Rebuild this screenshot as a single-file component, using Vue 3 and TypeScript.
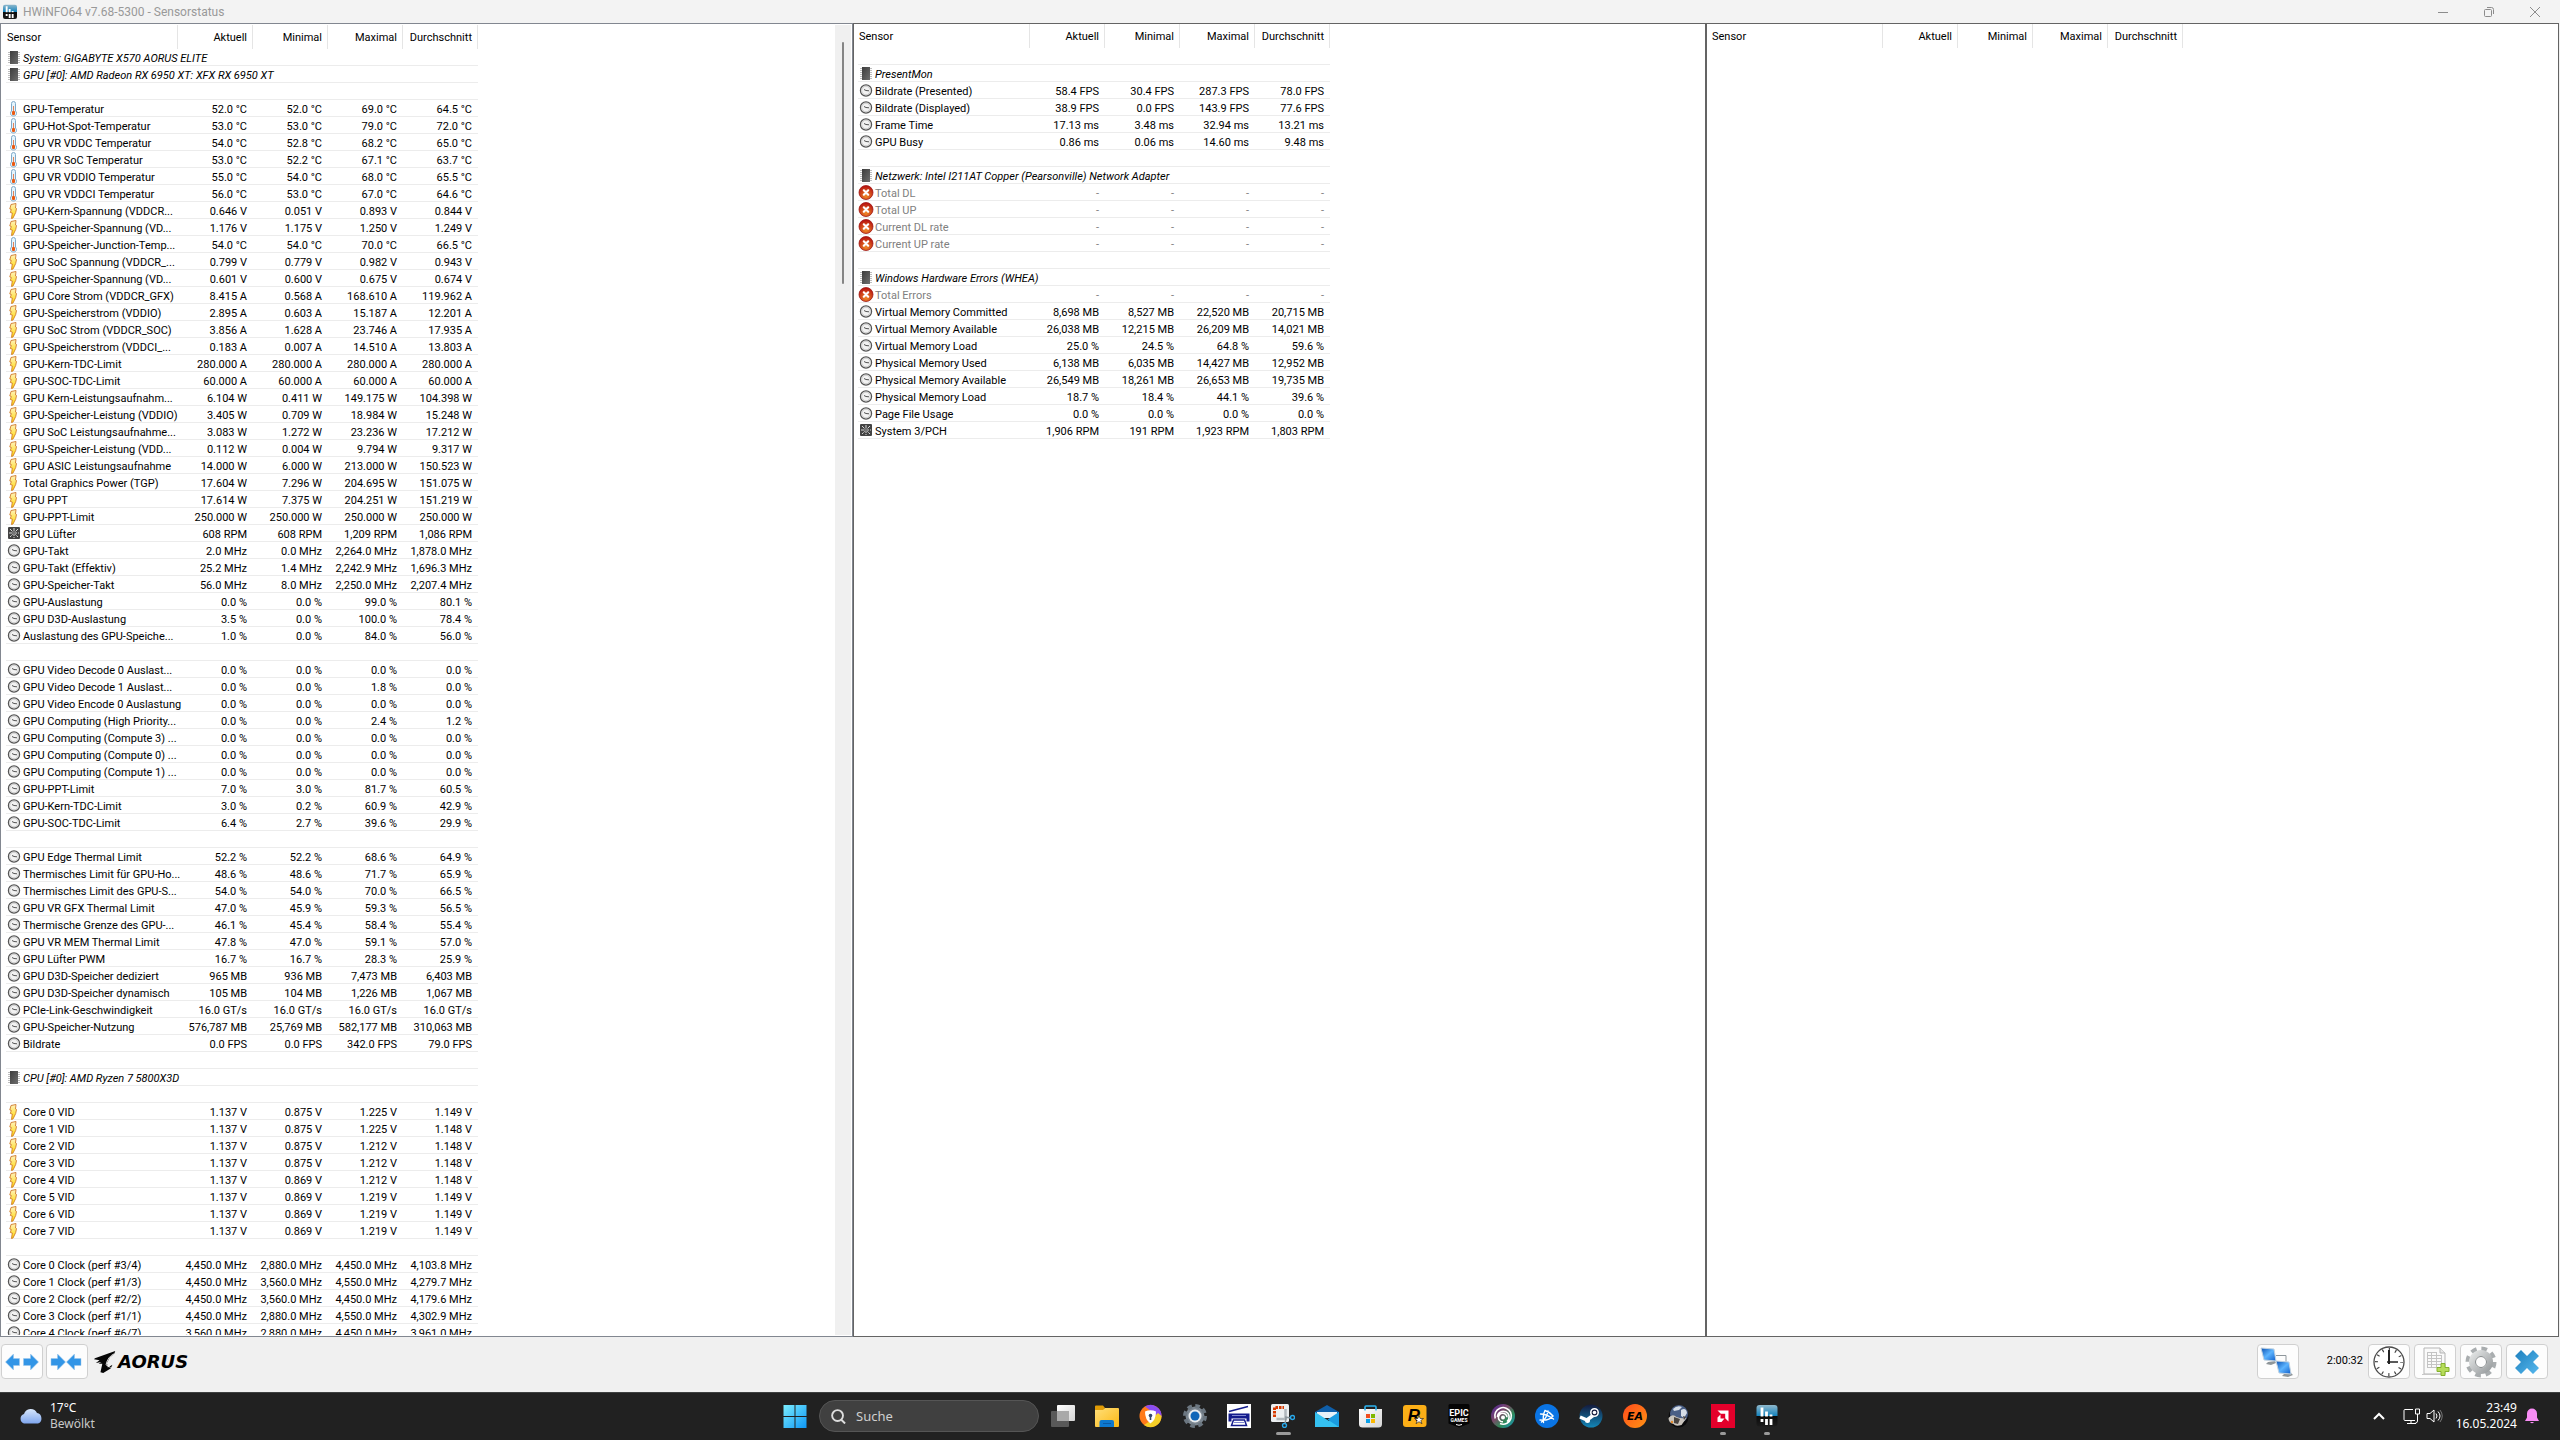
<script setup lang="ts">
type Kind = 'chip' | 'temp' | 'bolt' | 'fan' | 'clock' | 'off'

interface Row {
  kind: Kind | null
  label: string
  values: string[]
}

interface LogoText {
  text: string
  x: number
  y: number
  style: string
}

interface TaskbarApp {
  icon: string
  name: string
  state?: 'active' | 'open'
  logo?: LogoText[]
  overlay?: string
}

const columns = ['Aktuell', 'Minimal', 'Maximal', 'Durchschnitt']

function parse(source: string): Row[] {
  return source
    .trim()
    .split('\n')
    .map((line) => {
      const [kind, label, ...values] = line.trim().split('|')
      return kind === '-'
        ? { kind: null, label: '', values: [] }
        : { kind: kind as Kind, label, values }
    })
}

const systemRows = parse(`
chip|System: GIGABYTE X570 AORUS ELITE
chip|GPU [#0]: AMD Radeon RX 6950 XT: XFX RX 6950 XT
-
temp|GPU-Temperatur|52.0 °C|52.0 °C|69.0 °C|64.5 °C
temp|GPU-Hot-Spot-Temperatur|53.0 °C|53.0 °C|79.0 °C|72.0 °C
temp|GPU VR VDDC Temperatur|54.0 °C|52.8 °C|68.2 °C|65.0 °C
temp|GPU VR SoC Temperatur|53.0 °C|52.2 °C|67.1 °C|63.7 °C
temp|GPU VR VDDIO Temperatur|55.0 °C|54.0 °C|68.0 °C|65.5 °C
temp|GPU VR VDDCI Temperatur|56.0 °C|53.0 °C|67.0 °C|64.6 °C
bolt|GPU-Kern-Spannung (VDDCR...|0.646 V|0.051 V|0.893 V|0.844 V
bolt|GPU-Speicher-Spannung (VD...|1.176 V|1.175 V|1.250 V|1.249 V
temp|GPU-Speicher-Junction-Temp...|54.0 °C|54.0 °C|70.0 °C|66.5 °C
bolt|GPU SoC Spannung (VDDCR_...|0.799 V|0.779 V|0.982 V|0.943 V
bolt|GPU-Speicher-Spannung (VD...|0.601 V|0.600 V|0.675 V|0.674 V
bolt|GPU Core Strom (VDDCR_GFX)|8.415 A|0.568 A|168.610 A|119.962 A
bolt|GPU-Speicherstrom (VDDIO)|2.895 A|0.603 A|15.187 A|12.201 A
bolt|GPU SoC Strom (VDDCR_SOC)|3.856 A|1.628 A|23.746 A|17.935 A
bolt|GPU-Speicherstrom (VDDCI_...|0.183 A|0.007 A|14.510 A|13.803 A
bolt|GPU-Kern-TDC-Limit|280.000 A|280.000 A|280.000 A|280.000 A
bolt|GPU-SOC-TDC-Limit|60.000 A|60.000 A|60.000 A|60.000 A
bolt|GPU Kern-Leistungsaufnahm...|6.104 W|0.411 W|149.175 W|104.398 W
bolt|GPU-Speicher-Leistung (VDDIO)|3.405 W|0.709 W|18.984 W|15.248 W
bolt|GPU SoC Leistungsaufnahme...|3.083 W|1.272 W|23.236 W|17.212 W
bolt|GPU-Speicher-Leistung (VDD...|0.112 W|0.004 W|9.794 W|9.317 W
bolt|GPU ASIC Leistungsaufnahme|14.000 W|6.000 W|213.000 W|150.523 W
bolt|Total Graphics Power (TGP)|17.604 W|7.296 W|204.695 W|151.075 W
bolt|GPU PPT|17.614 W|7.375 W|204.251 W|151.219 W
bolt|GPU-PPT-Limit|250.000 W|250.000 W|250.000 W|250.000 W
fan|GPU Lüfter|608 RPM|608 RPM|1,209 RPM|1,086 RPM
clock|GPU-Takt|2.0 MHz|0.0 MHz|2,264.0 MHz|1,878.0 MHz
clock|GPU-Takt (Effektiv)|25.2 MHz|1.4 MHz|2,242.9 MHz|1,696.3 MHz
clock|GPU-Speicher-Takt|56.0 MHz|8.0 MHz|2,250.0 MHz|2,207.4 MHz
clock|GPU-Auslastung|0.0 %|0.0 %|99.0 %|80.1 %
clock|GPU D3D-Auslastung|3.5 %|0.0 %|100.0 %|78.4 %
clock|Auslastung des GPU-Speiche...|1.0 %|0.0 %|84.0 %|56.0 %
-
clock|GPU Video Decode 0 Auslast...|0.0 %|0.0 %|0.0 %|0.0 %
clock|GPU Video Decode 1 Auslast...|0.0 %|0.0 %|1.8 %|0.0 %
clock|GPU Video Encode 0 Auslastung|0.0 %|0.0 %|0.0 %|0.0 %
clock|GPU Computing (High Priority...|0.0 %|0.0 %|2.4 %|1.2 %
clock|GPU Computing (Compute 3) ...|0.0 %|0.0 %|0.0 %|0.0 %
clock|GPU Computing (Compute 0) ...|0.0 %|0.0 %|0.0 %|0.0 %
clock|GPU Computing (Compute 1) ...|0.0 %|0.0 %|0.0 %|0.0 %
clock|GPU-PPT-Limit|7.0 %|3.0 %|81.7 %|60.5 %
clock|GPU-Kern-TDC-Limit|3.0 %|0.2 %|60.9 %|42.9 %
clock|GPU-SOC-TDC-Limit|6.4 %|2.7 %|39.6 %|29.9 %
-
clock|GPU Edge Thermal Limit|52.2 %|52.2 %|68.6 %|64.9 %
clock|Thermisches Limit für GPU-Ho...|48.6 %|48.6 %|71.7 %|65.9 %
clock|Thermisches Limit des GPU-S...|54.0 %|54.0 %|70.0 %|66.5 %
clock|GPU VR GFX Thermal Limit|47.0 %|45.9 %|59.3 %|56.5 %
clock|Thermische Grenze des GPU-...|46.1 %|45.4 %|58.4 %|55.4 %
clock|GPU VR MEM Thermal Limit|47.8 %|47.0 %|59.1 %|57.0 %
clock|GPU Lüfter PWM|16.7 %|16.7 %|28.3 %|25.9 %
clock|GPU D3D-Speicher dediziert|965 MB|936 MB|7,473 MB|6,403 MB
clock|GPU D3D-Speicher dynamisch|105 MB|104 MB|1,226 MB|1,067 MB
clock|PCIe-Link-Geschwindigkeit|16.0 GT/s|16.0 GT/s|16.0 GT/s|16.0 GT/s
clock|GPU-Speicher-Nutzung|576,787 MB|25,769 MB|582,177 MB|310,063 MB
clock|Bildrate|0.0 FPS|0.0 FPS|342.0 FPS|79.0 FPS
-
chip|CPU [#0]: AMD Ryzen 7 5800X3D
-
bolt|Core 0 VID|1.137 V|0.875 V|1.225 V|1.149 V
bolt|Core 1 VID|1.137 V|0.875 V|1.225 V|1.148 V
bolt|Core 2 VID|1.137 V|0.875 V|1.212 V|1.148 V
bolt|Core 3 VID|1.137 V|0.875 V|1.212 V|1.148 V
bolt|Core 4 VID|1.137 V|0.869 V|1.212 V|1.148 V
bolt|Core 5 VID|1.137 V|0.869 V|1.219 V|1.149 V
bolt|Core 6 VID|1.137 V|0.869 V|1.219 V|1.149 V
bolt|Core 7 VID|1.137 V|0.869 V|1.219 V|1.149 V
-
clock|Core 0 Clock (perf #3/4)|4,450.0 MHz|2,880.0 MHz|4,450.0 MHz|4,103.8 MHz
clock|Core 1 Clock (perf #1/3)|4,450.0 MHz|3,560.0 MHz|4,550.0 MHz|4,279.7 MHz
clock|Core 2 Clock (perf #2/2)|4,450.0 MHz|3,560.0 MHz|4,450.0 MHz|4,179.6 MHz
clock|Core 3 Clock (perf #1/1)|4,450.0 MHz|2,880.0 MHz|4,550.0 MHz|4,302.9 MHz
clock|Core 4 Clock (perf #6/7)|3,560.0 MHz|2,880.0 MHz|4,450.0 MHz|3,961.0 MHz
`)

const otherRows = parse(`
-
chip|PresentMon
clock|Bildrate (Presented)|58.4 FPS|30.4 FPS|287.3 FPS|78.0 FPS
clock|Bildrate (Displayed)|38.9 FPS|0.0 FPS|143.9 FPS|77.6 FPS
clock|Frame Time|17.13 ms|3.48 ms|32.94 ms|13.21 ms
clock|GPU Busy|0.86 ms|0.06 ms|14.60 ms|9.48 ms
-
chip|Netzwerk: Intel I211AT Copper (Pearsonville) Network Adapter
off|Total DL|-|-|-|-
off|Total UP|-|-|-|-
off|Current DL rate|-|-|-|-
off|Current UP rate|-|-|-|-
-
chip|Windows Hardware Errors (WHEA)
off|Total Errors|-|-|-|-
clock|Virtual Memory Committed|8,698 MB|8,527 MB|22,520 MB|20,715 MB
clock|Virtual Memory Available|26,038 MB|12,215 MB|26,209 MB|14,021 MB
clock|Virtual Memory Load|25.0 %|24.5 %|64.8 %|59.6 %
clock|Physical Memory Used|6,138 MB|6,035 MB|14,427 MB|12,952 MB
clock|Physical Memory Available|26,549 MB|18,261 MB|26,653 MB|19,735 MB
clock|Physical Memory Load|18.7 %|18.4 %|44.1 %|39.6 %
clock|Page File Usage|0.0 %|0.0 %|0.0 %|0.0 %
fan|System 3/PCH|1,906 RPM|191 RPM|1,923 RPM|1,803 RPM
`)

const panels: { rows: Row[]; scrolls: boolean }[] = [
  { rows: systemRows, scrolls: true },
  { rows: otherRows, scrolls: false },
  { rows: [], scrolls: false },
]

const apps: TaskbarApp[] = [
  { icon: 'taskview', name: 'Taskansicht' },
  { icon: 'explorer', name: 'Explorer' },
  { icon: 'vpn', name: 'Sicherheit' },
  { icon: 'settings', name: 'Einstellungen' },
  { icon: 'scan', name: 'Scanner' },
  { icon: 'snip', name: 'Snipping Tool', state: 'active' },
  { icon: 'mail', name: 'Mail' },
  { icon: 'store', name: 'Microsoft Store' },
  {
    icon: 'rockstar',
    name: 'Rockstar Games',
    logo: [{ text: 'R', x: 11, y: 17, style: 'logo-r' }],
    overlay: 'star',
  },
  {
    icon: 'epic',
    name: 'Epic Games',
    logo: [
      { text: 'EPIC', x: 12, y: 12, style: 'logo-epic' },
      { text: 'GAMES', x: 12, y: 18, style: 'logo-games' },
    ],
  },
  { icon: 'ubisoft', name: 'Ubisoft Connect' },
  { icon: 'battlenet', name: 'Battle.net' },
  { icon: 'steam', name: 'Steam' },
  { icon: 'ea', name: 'EA', logo: [{ text: 'EA', x: 12, y: 16, style: 'logo-ea' }] },
  { icon: 'globe', name: 'Simulator' },
  { icon: 'amd', name: 'AMD Software', state: 'open' },
  { icon: 'hwinfo', name: 'HWiNFO64', state: 'open' },
]
</script>

<template>
  <svg class="sprite" aria-hidden="true">
    <defs>
      <linearGradient id="g-chip" x1="0" y1="0" x2="1" y2="1">
        <stop offset="0" stop-color="#3c3c3c" /><stop offset="1" stop-color="#6e6e6e" />
      </linearGradient>
      <linearGradient id="g-bolt" x1="0" y1="0" x2="0" y2="1">
        <stop offset="0" stop-color="#fff3c0" /><stop offset="1" stop-color="#ffd800" />
      </linearGradient>
      <radialGradient id="g-off" cx=".5" cy=".75" r=".7">
        <stop offset="0" stop-color="#f08a28" /><stop offset="1" stop-color="#b81410" />
      </radialGradient>
      <linearGradient id="g-hw" x1="0" y1="0" x2="0" y2="1">
        <stop offset="0" stop-color="#8fb8cc" /><stop offset=".5" stop-color="#1583bd" />
        <stop offset=".52" stop-color="#0a0a0a" /><stop offset="1" stop-color="#1c1c1c" />
      </linearGradient>
      <linearGradient id="g-win" gradientUnits="userSpaceOnUse" x1="0" y1="0" x2="24" y2="24">
        <stop offset="0" stop-color="#7ef0ff" /><stop offset="1" stop-color="#0c95f5" />
      </linearGradient>
      <linearGradient id="g-cloud" x1="0" y1="0" x2="0" y2="1">
        <stop offset="0" stop-color="#d6e6fb" /><stop offset="1" stop-color="#7fa6ee" />
      </linearGradient>
      <linearGradient id="g-screen" x1="0" y1="0" x2="1" y2="1">
        <stop offset="0" stop-color="#0b4fb0" /><stop offset=".5" stop-color="#5cb4ff" /><stop offset="1" stop-color="#0f5cc8" />
      </linearGradient>
      <linearGradient id="g-gear" x1="0" y1="0" x2="1" y2="1">
        <stop offset="0" stop-color="#e2e4e4" /><stop offset="1" stop-color="#9a9ea0" />
      </linearGradient>
      <linearGradient id="g-cross" x1="0" y1="0" x2="1" y2="1">
        <stop offset="0" stop-color="#1d7fbd" /><stop offset="1" stop-color="#56b8ee" />
      </linearGradient>
      <linearGradient id="g-folder" x1="0" y1="0" x2="1" y2="1">
        <stop offset="0" stop-color="#ffdf7a" /><stop offset="1" stop-color="#fcb813" />
      </linearGradient>
      <linearGradient id="g-white" x1="0" y1="0" x2="1" y2="1">
        <stop offset="0" stop-color="#ffffff" /><stop offset="1" stop-color="#d4d4d4" />
      </linearGradient>
      <linearGradient id="g-ubi" x1="0" y1="0" x2="1" y2="1">
        <stop offset="0" stop-color="#4a1f98" /><stop offset=".4" stop-color="#7a4a68" />
        <stop offset=".65" stop-color="#2f8a58" /><stop offset="1" stop-color="#1794c8" />
      </linearGradient>
      <linearGradient id="g-steam" x1="0" y1="0" x2="0" y2="1">
        <stop offset="0" stop-color="#141a3c" /><stop offset="1" stop-color="#1387b8" />
      </linearGradient>
      <linearGradient id="g-ea" x1="0" y1="0" x2="1" y2="1">
        <stop offset="0" stop-color="#ff4b1c" /><stop offset="1" stop-color="#ff9314" />
      </linearGradient>
    </defs>

    <symbol id="i-chip" viewBox="0 0 16 16">
      <path d="M2 2.500h12M2 4.500h12M2 6.500h12M2 8.500h12M2 10.500h12M2 12.500h12" stroke="#bdbdbd" />
      <rect x="4" y="1" width="8" height="13" fill="url(#g-chip)" />
    </symbol>
    <symbol id="i-temp" viewBox="0 0 16 16">
      <path d="M5.500 2.500a2 2 0 0 1 4 0v7.500a3 3 0 0 1 1 2.500c0 1.600-1.300 2.500-3 2.500s-3-.900-3-2.500a3 3 0 0 1 1-2.500z" fill="#e4f4fd" stroke="#7fa9c8" />
      <path d="M7.500 5v6" stroke="#e0845c" />
      <rect x="6" y="10" width="3" height="4" rx="1" fill="#ea5a12" />
    </symbol>
    <symbol id="i-bolt" viewBox="0 0 16 16">
      <path d="M5 1.500l5-1-.500 4.500 1 .500-.800 4-2.700 5.500-1.500.500.800-5.500-2-.500 1-3-1.500-.500z" fill="url(#g-bolt)" stroke="#cf7a2c" stroke-width=".9" />
    </symbol>
    <symbol id="i-fan" viewBox="0 0 16 16">
      <rect x="2" y="1" width="12" height="12" rx="1" fill="#444" />
      <path d="M8 2v10M3 7h10M4 3l8 8M12 3l-8 8" stroke="#d8d8d8" stroke-dasharray="3.500 1" />
      <circle cx="8" cy="7" r="1.500" fill="#777" />
    </symbol>
    <symbol id="i-clock" viewBox="0 0 16 16">
      <circle cx="8" cy="7.500" r="5.600" fill="#e9e9e9" stroke="#555" stroke-width="1.200" />
      <circle cx="8" cy="7.500" r="4.300" fill="#f2f2f2" stroke="#c4c4c4" stroke-width=".8" />
      <path d="M6 6.500l2 1 3 .300" stroke="#555" fill="none" />
    </symbol>
    <symbol id="i-off" viewBox="0 0 16 16">
      <circle cx="8" cy="7.500" r="7" fill="url(#g-off)" stroke="#a01713" stroke-width=".8" />
      <path d="M5.800 5.300l4.400 4.400M10.200 5.300L5.800 9.700" stroke="#fff" stroke-width="2.200" stroke-linecap="round" />
    </symbol>

    <symbol id="i-hwinfo" viewBox="0 0 24 24">
      <rect x="1.500" y="1" width="21" height="21.500" rx="3" fill="url(#g-hw)" />
      <path d="M7 3.500v9M11.500 7.500v5M16 10.500v2M7 15v3M11.500 15v6M16 15v6" stroke="#fff" stroke-width="2.800" />
    </symbol>
    <symbol id="i-taskview" viewBox="0 0 24 24">
      <rect x="6" y="1" width="18" height="16" rx="1" fill="url(#g-white)" />
      <rect x="0" y="7" width="18" height="16" rx="1" fill="#6c6c6c" fill-opacity=".75" />
      <rect x="6" y="7" width="12" height="10" fill="#a9a9a9" />
    </symbol>
    <symbol id="i-explorer" viewBox="0 0 24 24">
      <path d="M0 2.500a1 1 0 0 1 1-1h7l2 2.500-2 3H0z" fill="#e09b05" />
      <path d="M0 6h8l2-2h13a1 1 0 0 1 1 1v17a1 1 0 0 1-1 1H1a1 1 0 0 1-1-1z" fill="url(#g-folder)" />
      <path d="M4.500 23v-5a2 2 0 0 1 2-2H17a2 2 0 0 1 2 2v5z" fill="#0d78cf" />
      <path d="M8 19.500h8" stroke="#0a5aa5" />
    </symbol>
    <symbol id="i-vpn" viewBox="0 0 24 24">
      <circle cx="11.500" cy="12" r="11" fill="#ff7a1a" />
      <path d="M6 2.500A11 11 0 0 1 22.500 13L16 10z" fill="#8a4df0" />
      <path d="M22.500 12A11 11 0 0 1 5 21l6-4 8-8z" fill="#f5cf28" />
      <path d="M6 7.500q5.500-2.500 11 0 0 8.500-5.500 12Q6 16 6 7.500z" fill="#fff" />
      <circle cx="11.500" cy="11.500" r="1.800" fill="#34456a" /><path d="M11.500 12v4" stroke="#34456a" stroke-width="1.600" />
    </symbol>
    <symbol id="i-settings" viewBox="0 0 24 24">
      <circle cx="12" cy="12" r="9.500" fill="#7c8791" />
      <circle cx="12" cy="12" r="10" fill="none" stroke="#6b7680" stroke-width="4" stroke-dasharray="4.500 3.354" />
      <circle cx="12" cy="12" r="6.500" fill="#e8ecef" /><circle cx="12" cy="12" r="4.500" fill="#0f66b8" />
    </symbol>
    <symbol id="i-scan" viewBox="0 0 24 24">
      <rect width="24" height="24" fill="#fff" />
      <path d="M2 7.500L21 2.500" stroke="#141c8c" stroke-width="1.500" />
      <path d="M1.500 9.500h21v8h-3v-3h-15v3h-3z" fill="#141c8c" />
      <path d="M6.500 16h11l2 5.500h-15z" fill="none" stroke="#141c8c" stroke-width="1.500" />
      <path d="M7 18.500h10M5 11.500h14" stroke="#8088d0" />
    </symbol>
    <symbol id="i-snip" viewBox="0 0 24 24">
      <rect width="18" height="18" rx="1.500" fill="#eceff1" />
      <path d="M3.500 13v-9.500H13" fill="none" stroke="#d83b01" stroke-width="3" stroke-dasharray="2.500 1" />
      <path d="M14.500 5v10h-9" fill="none" stroke="#b0b7bc" stroke-width="2.500" />
      <path d="M14 20l1-6M14 13l6 1" stroke="#8b949a" stroke-width="1.500" />
      <circle cx="21.500" cy="13.500" r="2" fill="none" stroke="#28a8ea" stroke-width="1.400" />
      <circle cx="13.500" cy="21.500" r="2" fill="none" stroke="#28a8ea" stroke-width="1.400" />
    </symbol>
    <symbol id="i-mail" viewBox="0 0 24 24">
      <path d="M0 8L12 1l12 7v5H0z" fill="#0f5ea8" />
      <path d="M2 8h20v6H2z" fill="#e8f1f8" />
      <path d="M0 8l14 9L24 8v15H0z" fill="#35c1f1" />
      <path d="M24 8v15L12.500 15.500z" fill="#1a9be0" />
    </symbol>
    <symbol id="i-store" viewBox="0 0 24 24">
      <path d="M0 5h23v15a3.500 3.500 0 0 1-3.500 3.500h-16A3.500 3.500 0 0 1 0 20z" fill="url(#g-white)" />
      <path d="M6 6.500V3q0-1 1-1h9q1 0 1 1v3.500" fill="none" stroke="#2db4f0" stroke-width="1.600" />
      <path d="M7 10h4v4H7z" fill="#f04e1f" /><path d="M12 10h4v4h-4z" fill="#7db800" />
      <path d="M7 15h4v4H7z" fill="#0aa0e8" /><path d="M12 15h4v4h-4z" fill="#fbb800" />
    </symbol>
    <symbol id="i-rockstar" viewBox="0 0 24 24">
      <rect y="1" width="23.500" height="22" rx="3" fill="#fcaf17" />
    </symbol>
    <symbol id="i-star" viewBox="0 0 24 24">
      <path d="M16 11.500l1.200 3h3.300l-2.700 2 1.200 3.200-3-2-3 2 1.200-3.200-2.700-2h3.300z" fill="#fff" stroke="#111" stroke-width=".6" />
    </symbol>
    <symbol id="i-epic" viewBox="0 0 24 24">
      <path d="M1.500 1.500q0-1.500 1.500-1.500h18q1.500 0 1.500 1.500v18L12 23.500 1.500 19.500z" fill="#050505" />
      <path d="M9 20.500q3 1.500 6 0" fill="none" stroke="#fff" />
    </symbol>
    <symbol id="i-ubisoft" viewBox="0 0 24 24">
      <circle cx="12" cy="12" r="12" fill="url(#g-ubi)" />
      <path d="M4.200 14.500A8.300 8.300 0 1 1 16 19.200Q12.500 21 9 19.500M6.500 13A5.800 5.800 0 1 1 16 17.500M12 17.800a4.300 4.300 0 1 1 4-4.500" fill="none" stroke="#fff" stroke-width="1.600" />
      <circle cx="12" cy="13.500" r="2" fill="#fff" />
    </symbol>
    <symbol id="i-battlenet" viewBox="0 0 24 24">
      <circle cx="12" cy="12" r="12" fill="#0a74e4" />
      <path d="M8.500 18.500q-1-7 1.500-12 5 1.500 8 5.500-4 5-13 4M5.500 10q6 0 13 5M13 7q-1 7-6.500 11" fill="none" stroke="#fff" stroke-width="1.400" stroke-linecap="round" />
    </symbol>
    <symbol id="i-steam" viewBox="0 0 24 24">
      <circle cx="12" cy="12" r="11.500" fill="url(#g-steam)" />
      <path d="M1 13l7 3 6-4.500" stroke="#fff" stroke-width="3.500" fill="none" />
      <circle cx="15.500" cy="8.500" r="3.700" fill="#141a3c" stroke="#fff" stroke-width="1.600" /><circle cx="15.500" cy="8.500" r="1.800" fill="#fff" />
      <circle cx="8.500" cy="16.500" r="2.500" fill="#fff" />
    </symbol>
    <symbol id="i-ea" viewBox="0 0 24 24">
      <circle cx="12" cy="12" r="12" fill="url(#g-ea)" />
    </symbol>
    <symbol id="i-globe" viewBox="0 0 24 24">
      <ellipse cx="11.500" cy="13" rx="10" ry="10.500" fill="#0a0a0c" />
      <circle cx="12" cy="10" r="9" fill="#4a5f86" />
      <path d="M6 5q4-4 9-2l-3 3-5 1zM14 6q5-3 6 3l-3 5-3-2z" fill="#d6dde6" />
      <path d="M1.500 14q4-5 8-1 5 2 10 1l-5 7q-6 2-8-1-5-1-5-6z" fill="#c9c4bd" />
      <path d="M7 13l6 2-2 5-4-1zM16 12l3 1-2 3z" fill="#4a4440" />
      <circle cx="5" cy="18" r="1.200" fill="#e58a2a" />
    </symbol>
    <symbol id="i-amd" viewBox="0 0 24 24">
      <rect width="24" height="24" fill="#e4002b" />
      <path d="M6.500 6.500h11v11l-3.300-3.300V9.800H9.800z" fill="#fff" /><path d="M9.500 10.500v4h4l-3 3.500h-4v-4.500z" fill="#fff" />
    </symbol>
  </svg>

  <div class="desktop">
    <header class="titlebar">
      <svg class="title-icon"><use href="#i-hwinfo" /></svg>
      <h1>HWiNFO64 v7.68-5300 - Sensorstatus</h1>
      <div class="window-controls">
        <button type="button" aria-label="Minimieren"><svg viewBox="0 0 10 10"><path d="M0 5.500h10" /></svg></button>
        <button type="button" aria-label="Wiederherstellen"><svg viewBox="0 0 10 10"><path d="M.500 3.500q0-1 1-1h5q1 0 1 1v5q0 1-1 1h-5q-1 0-1-1zM3 .500h4.500q2 0 2 2V7" /></svg></button>
        <button type="button" aria-label="Schließen"><svg viewBox="0 0 10 10"><path d="M0 0l10 10M10 0L0 10" /></svg></button>
      </div>
    </header>

    <main class="panels">
      <section v-for="(panel, p) in panels" :key="p" class="panel" :class="{ scrolls: panel.scrolls }">
        <div class="list">
          <table>
            <colgroup><col class="c-name" /><col v-for="c in columns" :key="c" class="c-value" /></colgroup>
            <thead>
              <tr><th scope="col">Sensor</th><th v-for="c in columns" :key="c" scope="col">{{ c }}</th></tr>
            </thead>
            <tbody>
              <tr v-for="(row, r) in panel.rows" :key="r" :class="row.kind ? 'is-' + row.kind : 'is-blank'">
                <td v-if="!row.values.length" colspan="5">
                  <span v-if="row.kind" class="name"><svg><use :href="'#i-' + row.kind" /></svg>{{ row.label }}</span>
                </td>
                <template v-else>
                  <td><span class="name"><svg><use :href="'#i-' + row.kind" /></svg>{{ row.label }}</span></td>
                  <td v-for="(value, v) in row.values" :key="v">{{ value }}</td>
                </template>
              </tr>
            </tbody>
          </table>
        </div>
        <div v-if="panel.scrolls" class="scrollbar"><div class="thumb"></div></div>
      </section>
    </main>

    <footer class="toolbar">
      <div class="group">
        <button type="button" aria-label="Spalten erweitern">
          <svg viewBox="0 0 36 32"><path d="M1.500 16l8-8v4.500h6v7h-6V24zM34.500 16l-8-8v4.500h-7v7h7V24z" fill="#3295e6" stroke="#9cc6ea" stroke-width=".5" /></svg>
        </button>
        <button type="button" aria-label="Spalten verkleinern">
          <svg viewBox="0 0 36 32"><path d="M16.500 16l-8-8v4.500H2v7h6.500V24zM17.500 16l8-8v4.500H32v7h-6.500V24z" fill="#3295e6" stroke="#9cc6ea" stroke-width=".5" /></svg>
        </button>
        <div class="aorus">
          <svg viewBox="0 0 26 24"><path d="M1 8L23 0l-1 3-5 4-3 6 1 5 5-3-2 4-8 5-3-1 2-9-4 0 3-2-6 1 4-3-6-1z" fill="#050505" /><path d="M22 3q-7 3-9 12l5 3" stroke="#efefef" fill="none" stroke-width="1" /></svg>
          <span>AORUS</span>
        </div>
      </div>
      <div class="group tools">
        <button type="button" aria-label="Netzwerk">
          <svg viewBox="0 0 36 32">
            <path d="M16 9.500h10V17" fill="none" stroke="#8f979c" />
            <path d="M8 16l7-1 1 2-5 2-5-1zM24 28l7-1 2 2-5 2-6-1z" fill="#8f9699" />
            <path d="M1 2l13 1 2 12-12-1z" fill="url(#g-screen)" stroke="#c2d2e0" />
            <path d="M16 15l13 1 2 12-12-1z" fill="url(#g-screen)" stroke="#c2d2e0" />
          </svg>
        </button>
        <output class="elapsed">2:00:32</output>
        <button type="button" aria-label="Uhr zurücksetzen">
          <svg viewBox="0 0 36 32">
            <circle cx="18" cy="16" r="15" fill="#fff" stroke="#4a4a4a" stroke-width="1.300" />
            <circle cx="18" cy="16" r="12.500" fill="none" stroke="#444" stroke-width="3" stroke-dasharray="1.200 5.345" stroke-dashoffset=".6" />
            <path d="M18 18V4" stroke="#222" stroke-width="2" /><path d="M16 16h11" stroke="#222" stroke-width="1.500" />
          </svg>
        </button>
        <button type="button" aria-label="Protokollierung starten">
          <svg viewBox="0 0 36 32">
            <path d="M7 2h16l5 5v21H7z" fill="#fafafa" stroke="#b5b5b5" /><path d="M23 2v5h5" fill="#e8e8e8" stroke="#b5b5b5" />
            <path d="M10 6.500h10M10 9.500h14M10 12.500h14M10 15.500h14M10 18.500h14M10 21.500h10M10.500 6v16M14.500 6v16M19.500 6v16M24.500 9v10" stroke="#c4c4c4" fill="none" />
            <path d="M5 28.500h22" stroke="#c8c8c8" />
            <path d="M24 17.500h4v4h4v4h-4v4h-4v-4h-4v-4h4z" fill="#b6dc5a" stroke="#83b02c" />
          </svg>
        </button>
        <button type="button" aria-label="Sensoreinstellungen">
          <svg viewBox="0 0 36 32">
            <circle cx="18" cy="16" r="13" fill="none" stroke="#a9adaf" stroke-width="5" stroke-dasharray="5.500 4.710" />
            <circle cx="18" cy="16" r="9" fill="none" stroke="url(#g-gear)" stroke-width="6" />
            <circle cx="18" cy="16" r="5.500" fill="#fdfdfd" stroke="#868a8c" />
          </svg>
        </button>
        <button type="button" aria-label="Schließen">
          <svg viewBox="0 0 36 32"><path d="M12 4l6 6 6-6 6 6-6 6 6 6-6 6-6-6-6 6-6-6 6-6-6-6z" fill="url(#g-cross)" /></svg>
        </button>
      </div>
    </footer>

    <nav class="taskbar">
      <button type="button" class="weather">
        <svg viewBox="0 0 24 16"><path d="M5 15.500a5 5 0 0 1 0-9.500 7 7 0 0 1 13-1 5.500 5.500 0 0 1 1 10.500z" fill="url(#g-cloud)" /></svg>
        <span class="lines"><span>17°C</span><span class="dim">Bewölkt</span></span>
      </button>
      <div class="center">
        <button type="button" class="app" aria-label="Start">
          <svg viewBox="0 0 24 24"><path d="M.500 1H11.500v11H.500zM12.500 1h11v11h-11zM.500 13H11.500v11H.500zM12.500 13h11v11h-11z" fill="url(#g-win)" /></svg>
        </button>
        <label class="search">
          <svg viewBox="0 0 16 16"><circle cx="7" cy="7" r="5.800" /><path d="M11 11.500l4 4" /></svg>
          <input type="search" placeholder="Suche" aria-label="Suche" />
        </label>
        <button v-for="app in apps" :key="app.icon" type="button" class="app" :class="app.state" :aria-label="app.name">
          <svg viewBox="0 0 24 24">
            <use :href="'#i-' + app.icon" />
            <text v-for="part in app.logo" :key="part.text" :x="part.x" :y="part.y" :class="part.style">{{ part.text }}</text>
            <use v-if="app.overlay" :href="'#i-' + app.overlay" />
          </svg>
        </button>
      </div>
      <div class="tray">
        <button type="button" aria-label="Ausgeblendete Symbole"><svg class="chevron" viewBox="0 0 12 8"><path d="M1 7l5-5 5 5" /></svg></button>
        <button type="button" class="status" aria-label="Netzwerk und Ton">
          <svg class="net" viewBox="0 0 17 17"><path d="M10 1.500H2q-1 0-1 1v9q0 1 1 1h10M8 12.500v3M4 15.500h9M12.500 1h4v5h-4zM14.500 6v7q0 2-2 2" /></svg>
          <svg class="sound" viewBox="0 0 17 16"><path d="M1 5.500h3l4-3.500v12l-4-3.500H1zM10 5.500q2 2.500 0 5" /><path d="M12 3.500q4 4.500 0 9" /><path d="M14 2q4.500 6 0 12" class="faint" /></svg>
        </button>
        <button type="button" class="lines clock"><span>23:49</span><span>16.05.2024</span></button>
        <button type="button" aria-label="Benachrichtigungen"><svg class="bell" viewBox="0 0 14 16"><path d="M7 0.500a5 5 0 0 1 5 5v4l2 3.500H0l2-3.500v-4a5 5 0 0 1 5-5zM5 14h4q-2 2.500-4 0z" /></svg></button>
      </div>
    </nav>
  </div>
</template>

<style>
body {
  margin: 0;
}
</style>

<style scoped>
.sprite {
  position: absolute;
  width: 0;
  height: 0;
}
.logo-r {
  font: italic 700 17px 'Liberation Sans', sans-serif;
  text-anchor: middle;
}
.logo-epic {
  font: 700 9px 'Roboto', sans-serif;
  fill: #fff;
  text-anchor: middle;
}
.logo-games {
  font: 700 5px 'Roboto', sans-serif;
  fill: #fff;
  text-anchor: middle;
}
.logo-ea {
  font: italic 700 11px 'DejaVu Sans', sans-serif;
  text-anchor: middle;
}
.desktop {
  display: flex;
  flex-direction: column;
  height: 100vh;
  overflow: hidden;
  background: #f0f0f0;
  color: #000;
  font-family: 'Roboto', sans-serif;
  font-size: 11px;
}
button {
  padding: 0;
  border: 0;
  background: none;
  color: inherit;
  font: inherit;
}

.titlebar {
  display: flex;
  align-items: center;
  height: 23px;
  flex: none;
  padding: 0 2px;
  background: #f3f3f3;
}
.title-icon {
  width: 16px;
  height: 16px;
}
h1 {
  flex: 1;
  margin: 0 0 0 5px;
  color: #999;
  font: 400 12px/20px 'Roboto', sans-serif;
}
.window-controls {
  display: flex;
}
.window-controls button {
  display: flex;
  justify-content: center;
  width: 46px;
}
.window-controls svg {
  width: 10px;
  height: 10px;
  fill: none;
  stroke: #8c8c8c;
  overflow: visible;
}

.panels {
  display: grid;
  grid-template-columns: repeat(3, 1fr);
  flex: 1;
  min-height: 0;
  padding-right: 1px;
}
.panel {
  display: flex;
  min-width: 0;
  min-height: 0;
  border: 1px solid #646464;
  background: #fff;
}
.panel.scrolls {
  padding: 1px;
  border-color: #828790;
}
.list {
  flex: 1;
  min-width: 0;
  overflow: hidden;
}
table {
  width: 472px;
  margin-left: 4px;
  border-spacing: 0;
  table-layout: fixed;
}
.c-name {
  width: 172px;
}
.c-value {
  width: 75px;
}
th {
  height: 24px;
  padding: 0 5px 0 0;
  border-right: 1px solid #e5e5e5;
  font-weight: 400;
  text-align: right;
  box-sizing: border-box;
}
th:first-child {
  padding-left: 1px;
  text-align: left;
}
td {
  height: 17px;
  padding: 3px 6px 0 0;
  border-bottom: 1px solid #ececec;
  line-height: 13px;
  text-align: right;
  white-space: nowrap;
  box-sizing: border-box;
}
td:first-child {
  padding-right: 0;
  text-align: left;
}
.name {
  display: flex;
  align-items: flex-start;
  gap: 1px;
}
.name svg {
  flex: none;
  width: 16px;
  height: 16px;
  margin: -2px 0;
}
.is-chip {
  font-style: italic;
}
.is-off {
  color: #808080;
}
.scrollbar {
  display: flex;
  justify-content: center;
  width: 16px;
  background: #f0f0f0;
}
.thumb {
  width: 2px;
  height: 242px;
  margin-top: 17px;
  border-radius: 1px;
  background: #858585;
}

.toolbar {
  display: flex;
  justify-content: space-between;
  flex: none;
  height: 55px;
  padding: 7px 12px 0 1px;
  box-sizing: border-box;
}
.group {
  display: flex;
  align-items: center;
  gap: 3px;
  height: 35px;
}
.group button {
  display: flex;
  align-items: center;
  justify-content: center;
  width: 42px;
  height: 35px;
  border: 1px solid #d0d0d0;
  border-radius: 4px;
  background: #fdfdfd;
  box-sizing: border-box;
}
.group button svg {
  flex: none;
  width: 36px;
  height: 32px;
}
.tools {
  gap: 4px;
}
.elapsed {
  width: 61px;
  padding: 0 1px 3px 0;
  text-align: right;
  box-sizing: border-box;
}
.aorus {
  display: flex;
  align-items: center;
  margin-left: 3px;
}
.aorus svg {
  width: 24px;
  height: 24px;
}
.aorus span {
  font: italic 700 18px/24px 'DejaVu Sans', sans-serif;
}

.taskbar {
  display: grid;
  grid-template-columns: 1fr auto 1fr;
  flex: none;
  height: 48px;
  background: #212121;
  box-shadow: inset 0 1px #3e4040;
  color: #fff;
  font: 12px/16px 'Noto Sans', sans-serif;
}
.weather {
  display: flex;
  align-items: center;
  gap: 7px;
  padding-left: 19px;
}
.weather svg {
  width: 24px;
  height: 16px;
}
.lines {
  display: flex;
  flex-direction: column;
  text-align: left;
}
.dim {
  color: #c8c8c8;
}
.center {
  display: flex;
  align-items: center;
  padding-left: 2px;
}
.app {
  display: flex;
  align-items: center;
  justify-content: center;
  position: relative;
  width: 44px;
  height: 48px;
  color: #000;
}
.app svg {
  width: 24px;
  height: 24px;
}
.app.active::after,
.app.open::after {
  content: '';
  position: absolute;
  bottom: 5px;
  width: 6px;
  height: 3px;
  border-radius: 2px;
  background: #9a9a9a;
}
.app.active::after {
  width: 15px;
}
.search {
  display: flex;
  align-items: center;
  gap: 10px;
  width: 220px;
  height: 32px;
  margin: 0 2px;
  padding: 0 11px;
  border: 1px solid #555;
  border-radius: 16px;
  background: #404040;
  box-sizing: border-box;
}
.search svg {
  flex: none;
  width: 15px;
  height: 15px;
  fill: none;
  stroke: #ddd;
  stroke-width: 2;
}
.search input {
  min-width: 0;
  flex: 1;
  padding: 0;
  border: 0;
  background: none;
  color: #fff;
  font: 13px/18px 'Noto Sans', sans-serif;
  outline: none;
}
.search input::placeholder {
  color: #cfcfcf;
  opacity: 1;
}
.tray {
  display: flex;
  align-items: center;
  justify-content: flex-end;
  padding-right: 21px;
}
.tray svg {
  display: block;
  fill: none;
  stroke: #fff;
  stroke-width: 1;
}
.tray .chevron {
  width: 12px;
  height: 8px;
  stroke-width: 2;
}
.status {
  display: flex;
  align-items: center;
  gap: 6px;
  margin: 0 13px 0 18px;
}
.net {
  width: 17px;
  height: 17px;
}
.sound {
  width: 17px;
  height: 16px;
}
.faint {
  stroke: #777;
}
.clock {
  margin-right: 8px;
  text-align: right;
}
.tray .bell {
  width: 14px;
  height: 16px;
  fill: #f88cf4;
  stroke: none;
}
</style>
